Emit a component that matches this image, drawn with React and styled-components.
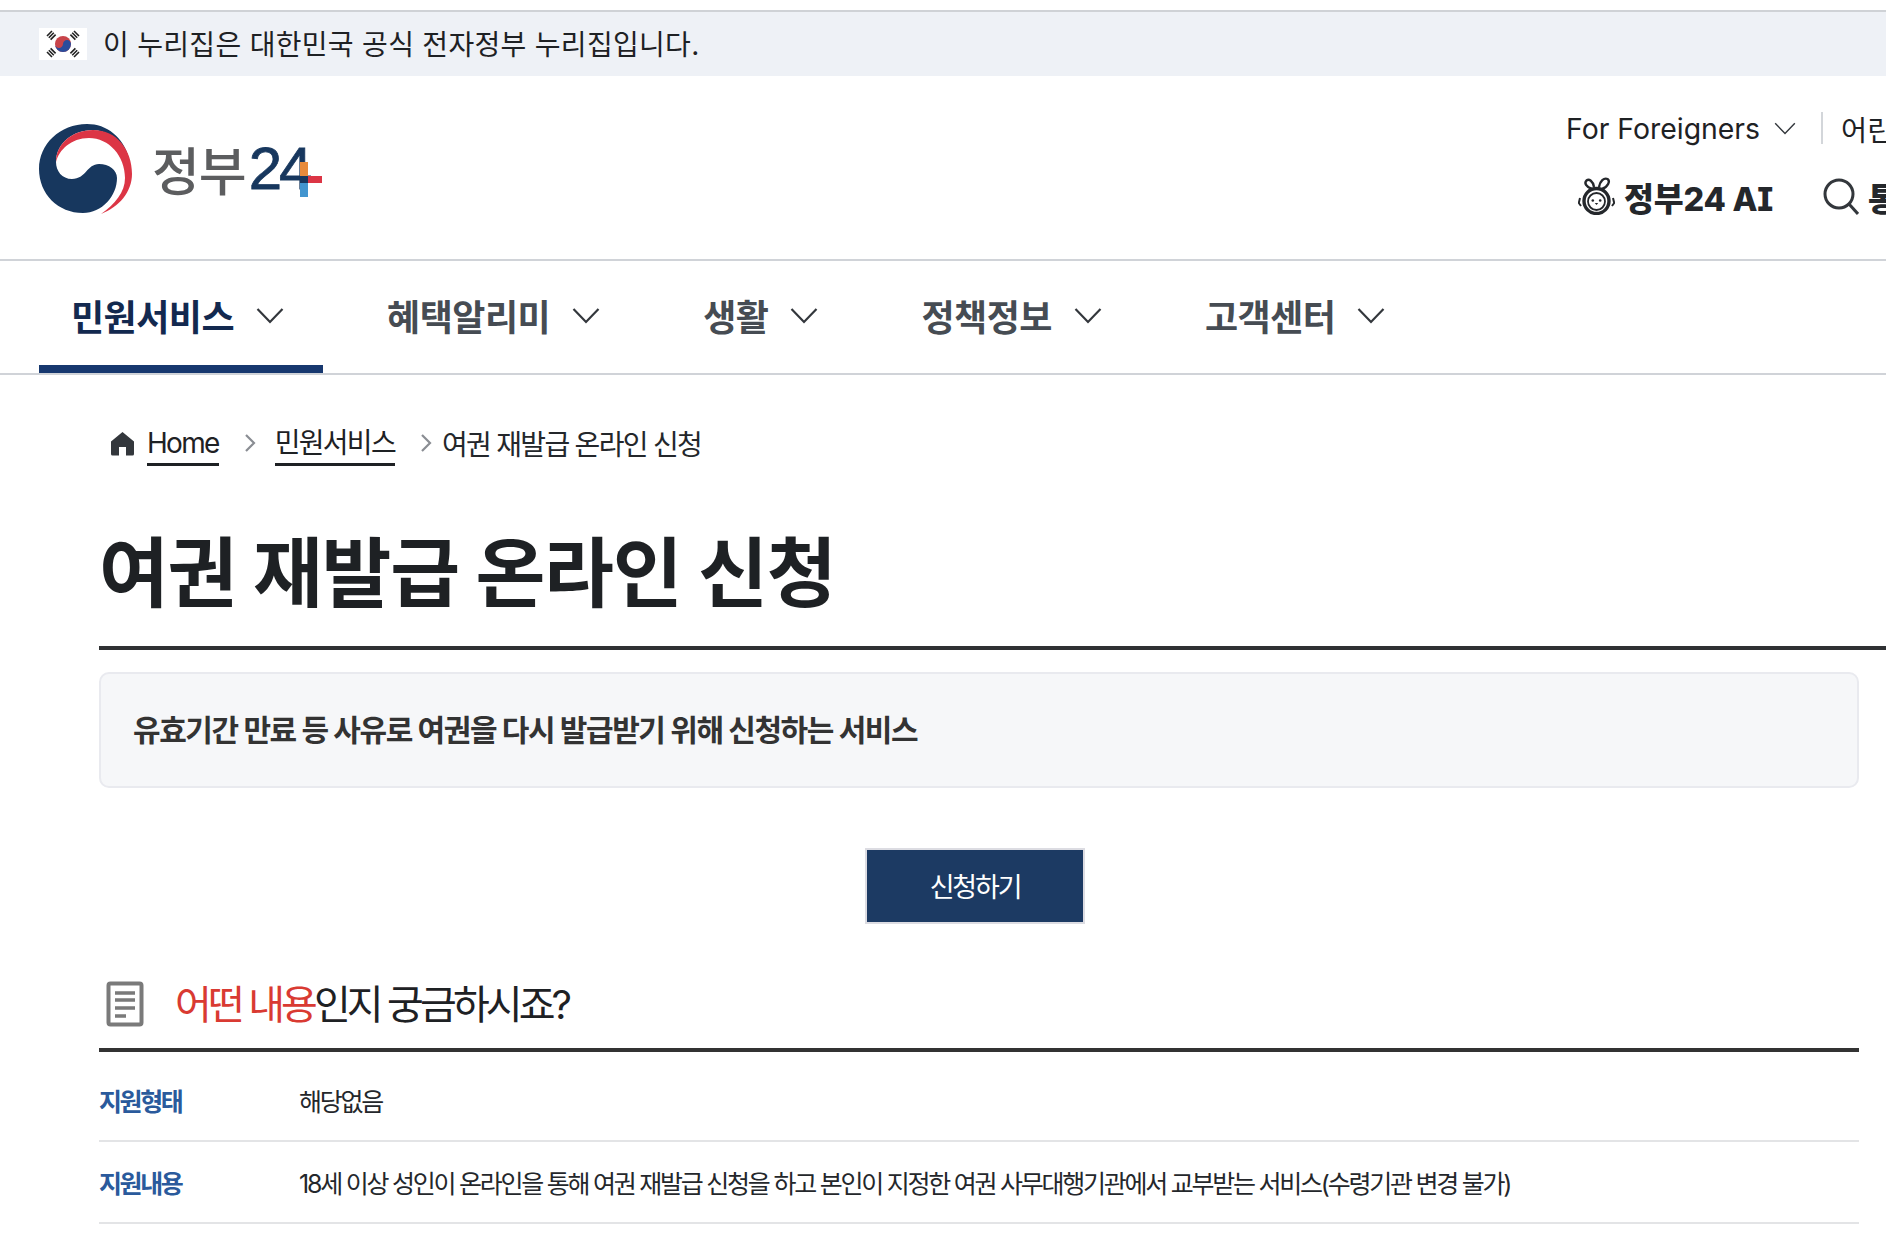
import React from "react";
import styled, { createGlobalStyle } from "styled-components";

const FONT = `Inter, "Noto Sans CJK KR", "Noto Sans", sans-serif`;

const GlobalStyle = createGlobalStyle`
  html, body {
    margin: 0;
    padding: 0;
    background: #fff;
    overflow: hidden;
  }
  body {
    font-family: ${FONT};
    color: #1e2124;
  }
`;

const Page = styled.div`
  width: 1886px;
  height: 1258px;
  overflow: hidden;
  padding-top: 10px;
  box-sizing: border-box;
`;

const Banner = styled.div`
  height: 64px;
  box-sizing: content-box;
  border-top: 2px solid #cfd2d6;
  background: #eef1f6;
  padding-left: 39px;
  display: flex;
  align-items: center;
  gap: 16px;
  font-size: 28px;
  letter-spacing: 0.3px;
  color: #1e2124;
`;

const BannerText = styled.span`
  margin-top: -2px;
`;

const Header = styled.header`
  height: 183px;
  padding-left: 39px;
  display: flex;
  align-items: flex-start;
  justify-content: space-between;
  border-bottom: 2px solid #d0d3d8;
`;

const Logo = styled.div`
  display: flex;
  align-items: center;
  margin-top: 48px;
  height: 89px;
`;

const LogoKo = styled.span`
  margin-left: 19px;
  font-size: 52px;
  font-weight: 500;
  color: #5c5d5f;
  letter-spacing: -1px;
`;

const LogoNum = styled.span`
  font-family: "Liberation Sans", sans-serif;
  font-size: 60px;
  color: #17375e;
  -webkit-text-stroke: 0.8px #17375e;
  letter-spacing: -3px;
  margin-left: 3px;
`;

const LogoPlus = styled.svg`
  width: 22px;
  height: 35px;
  margin: 22px 0 0 -9px;
`;

const Utility = styled.div`
  flex: none;
  width: 320px;
  display: flex;
  flex-direction: column;
`;

const UtilTop = styled.div`
  display: flex;
  align-items: center;
  margin-top: 36px;
  height: 32px;
  font-size: 28.4px;
  white-space: nowrap;
`;

const UtilDivider = styled.span`
  flex: none;
  width: 2px;
  height: 32px;
  background: #d3d6da;
  margin: 0 18px 0 25px;
`;

const UtilBottom = styled.div`
  display: flex;
  align-items: center;
  margin: 32px 0 0 12px;
  height: 40px;
  font-size: 32.5px;
  font-weight: 800;
  letter-spacing: -0.2px;
  font-feature-settings: "cv08";
  white-space: nowrap;
  color: #24272b;
`;

const UtilGap = styled.span`
  width: 50px;
  flex: none;
`;

const Mascot = styled.svg`
  width: 37px;
  height: 38px;
  margin-right: 9px;
  flex: none;
`;

const SearchIcon = styled.svg`
  width: 36px;
  height: 37px;
  margin-right: 9px;
  flex: none;
`;

const ChevronSvg = styled.svg`
  flex: none;
  width: ${({ $size }) => $size}px;
  height: ${({ $size }) => $size}px;
  margin-left: ${({ $gap }) => $gap}px;
`;

const Nav = styled.nav`
  height: 112px;
  padding-left: 39px;
  display: flex;
  gap: 32px;
  border-bottom: 2px solid #d0d3d8;
`;

const NavItem = styled.a`
  display: flex;
  align-items: center;
  padding: 4px 39px 0 32px;
  height: 112px;
  box-sizing: border-box;
  font-size: 36px;
  font-weight: 700;
  letter-spacing: -0.5px;
  color: ${({ $active }) => ($active ? "#13294f" : "#464c53")};
  border-bottom: 8px solid ${({ $active }) => ($active ? "#17386f" : "transparent")};
`;

const Main = styled.main`
  padding: 0 27px 0 99px;
`;

const Breadcrumb = styled.div`
  display: flex;
  align-items: center;
  height: 40px;
  margin: 48px 0 0 11px;
  font-size: 28px;
  letter-spacing: -1.7px;
  color: #24272b;
`;

const HomeIcon = styled.svg`
  width: 25px;
  height: 25px;
  margin-right: 12px;
`;

const CrumbLink = styled.a`
  color: #1e2124;
  padding-top: 3px;
  border-bottom: 3px solid #1e2124;
  line-height: 39px;
`;

const CrumbCurrent = styled.span`
  margin-left: -9px;
`;

const CrumbSep = styled.svg`
  width: 12px;
  height: 20px;
  margin: 0 19px 0 25px;
`;

const PageTitle = styled.h1`
  margin: 0 -27px 0 0;
  height: 187px;
  padding-top: 60px;
  box-sizing: border-box;
  border-bottom: 4px solid #2f3133;
  font-size: 76px;
  line-height: 100px;
  font-weight: 700;
  letter-spacing: -1.3px;
  color: #1e2124;
`;

const Summary = styled.div`
  margin-top: 22px;
  height: 116px;
  box-sizing: border-box;
  padding: 0 0 5px 32px;
  display: flex;
  align-items: center;
  border: 2px solid #e9eaef;
  border-radius: 10px;
  background: #f6f7f9;
  font-size: 30px;
  font-weight: 700;
  letter-spacing: -1.42px;
  color: #333;
`;

const ButtonRow = styled.div`
  margin-top: 60px;
  padding-right: 8px;
  display: flex;
  justify-content: center;
`;

const ApplyButton = styled.button`
  width: 220px;
  height: 76px;
  border: 2px solid #dcdce2;
  background: #1c3a63;
  color: #fff;
  font-family: ${FONT};
  font-size: 27px;
  letter-spacing: -2.2px;
  padding: 0 0 2px;
`;

const SectionHead = styled.div`
  margin-top: 46px;
  height: 64px;
  padding: 0 0 14px 7px;
  display: flex;
  align-items: center;
  border-bottom: 4px solid #333;
  font-size: 40px;
  letter-spacing: -3.9px;
  color: #1e2124;
`;

const DocIcon = styled.svg`
  width: 38px;
  height: 46px;
  margin: 4px 31px 0 0;
`;

const Red = styled.span`
  color: #d93a32;
`;

const InfoList = styled.div`
  margin-top: 8px;
`;

const InfoRow = styled.div`
  display: flex;
  align-items: center;
  height: 80px;
  border-bottom: 2px solid #e3e4e6;
  font-size: 25px;
`;

const InfoLabel = styled.div`
  width: 200px;
  flex: none;
  font-weight: 700;
  letter-spacing: -2.4px;
  color: #2a5a9c;
`;

const InfoValue = styled.div`
  letter-spacing: -2.25px;
  color: #24272b;
  white-space: nowrap;
`;

const Chevron = ({ size = 28, gap = 22, color = "#33373c", width = 2.2 }) => (
  <ChevronSvg $size={size} $gap={gap} viewBox="0 0 28 28" fill="none">
    <path d="M1.5 8 14 21 26.5 8" stroke={color} strokeWidth={width} />
  </ChevronSvg>
);

const Taegeuk = () => (
  <svg width="94" height="90" viewBox="0 0 94 90">
    <path
      fill="#17375e"
      d="M48 0C21 0 0 20 0 45c0 25 19 44 44 44 19 0 34-17 34-35 0-8-8-14-18-14-12 0-13 15-27 15-10 0-16-8-16-17C17 20 33 6 54 6c13 0 26 10 36 28C84 13 68 0 48 0Z"
    />
    <path
      fill="#dc3545"
      d="M17 38C17 20 33 6 54 6c24 0 39 20 39 44 0 18-13 33-31 40 14-10 24-22 24-36C86 32 70 14 50 14 32 14 20 26 17 38Z"
    />
  </svg>
);

const Flag = () => (
  <svg width="48" height="32" viewBox="0 0 48 32">
    <rect width="48" height="32" fill="#fff" />
    <circle cx="24" cy="16" r="8" fill="#c8444a" />
    <path d="M16 16a8 8 0 0 0 16 0c0-2.200-1.800-4-4-4s-4 1.800-4 4-1.800 4-4 4-4-1.800-4-4Z" fill="#2a4c9c" />
    <g stroke="#222" strokeWidth="1.600">
      <path d="M8 8 13 3M9.800 9.800 14.800 4.800M11.600 11.600 16.600 6.600" />
      <path d="M31.400 6.600l5 5M33.200 4.800l5 5M35 3l5 5" />
      <path d="M8 24l5 5M9.800 22.200l5 5M11.600 20.400l5 5" />
      <path d="M31.400 25.400l5-5M33.200 27.200l5-5M35 29l5-5" />
    </g>
  </svg>
);

const MascotIcon = () => (
  <Mascot viewBox="0 0 37 38" fill="none" stroke="#24272b" strokeWidth="2.400">
    <path d="M14 12C8 10 6 6 8.500 3.500 11 1.500 15 4 16 10" />
    <path d="M21 10C22 4 26 0.500 29.500 2 32.500 4 30 10 24 12" />
    <path d="M2 21 0.800 26 3 29M35 21 36.200 26 34 29" strokeWidth="2" />
    <circle cx="18.500" cy="24" r="12.500" fill="#fff" strokeWidth="3.400" />
    <circle cx="18.500" cy="24.500" r="8.500" strokeWidth="1.800" />
    <circle cx="14.800" cy="23.500" r="1.300" fill="#24272b" stroke="none" />
    <circle cx="22.200" cy="23.500" r="1.300" fill="#24272b" stroke="none" />
    <path d="M16.800 26h3.400l-1.700 2Z" fill="#24272b" stroke="none" />
  </Mascot>
);

const Separator = () => (
  <CrumbSep viewBox="0 0 12 20" fill="none">
    <path d="M2 2l8 8-8 8" stroke="#8a8d93" strokeWidth="2.200" />
  </CrumbSep>
);

export default function App() {
  return (
    <Page>
      <GlobalStyle />
      <Banner>
        <Flag />
        <BannerText>이 누리집은 대한민국 공식 전자정부 누리집입니다.</BannerText>
      </Banner>

      <Header>
        <Logo>
          <Taegeuk />
          <LogoKo>정부</LogoKo>
          <LogoNum>24</LogoNum>
          <LogoPlus viewBox="0 0 22 35">
            <rect x="0" y="0" width="8" height="14" fill="#e88b3c" />
            <rect x="8" y="14" width="14" height="7" fill="#dc3545" />
            <rect x="0" y="21" width="8" height="14" fill="#4295cf" />
            <rect x="0" y="14" width="8" height="7" fill="#17375e" />
          </LogoPlus>
        </Logo>
        <Utility>
          <UtilTop>
            For Foreigners
            <Chevron size={22} gap={14} width={1.8} />
            <UtilDivider />
            어린이
          </UtilTop>
          <UtilBottom>
            <MascotIcon />
            정부24 AI
            <UtilGap />
            <SearchIcon viewBox="0 0 36 37" fill="none" stroke="#33373c" strokeWidth="3">
              <circle cx="16" cy="16" r="14" />
              <path d="M26 26 35 36" />
            </SearchIcon>
            통합검색
          </UtilBottom>
        </Utility>
      </Header>

      <Nav>
        <NavItem $active>민원서비스<Chevron /></NavItem>
        <NavItem>혜택알리미<Chevron /></NavItem>
        <NavItem>생활<Chevron /></NavItem>
        <NavItem>정책정보<Chevron /></NavItem>
        <NavItem>고객센터<Chevron /></NavItem>
      </Nav>

      <Main>
        <Breadcrumb>
          <HomeIcon viewBox="0 0 25 25">
            <path fill="#33373c" d="M12.500 1 24 10.500V23a1.500 1.500 0 0 1-1.500 1.500H16V16H9v8.500H2.500A1.500 1.500 0 0 1 1 23V10.500Z" />
          </HomeIcon>
          <CrumbLink>Home</CrumbLink>
          <Separator />
          <CrumbLink>민원서비스</CrumbLink>
          <Separator />
          <CrumbCurrent>여권 재발급 온라인 신청</CrumbCurrent>
        </Breadcrumb>

        <PageTitle>여권 재발급 온라인 신청</PageTitle>

        <Summary>유효기간 만료 등 사유로 여권을 다시 발급받기 위해 신청하는 서비스</Summary>

        <ButtonRow>
          <ApplyButton>신청하기</ApplyButton>
        </ButtonRow>

        <SectionHead>
          <DocIcon viewBox="0 0 38 46" fill="none">
            <rect x="2.500" y="2.500" width="33" height="41" rx="2" stroke="#7a7a7a" strokeWidth="4" />
            <path d="M9 12h20M9 19h20M9 27h20M9 35h11" stroke="#7a7a7a" strokeWidth="3.500" />
          </DocIcon>
          <span><Red>어떤 내용</Red>인지 궁금하시죠?</span>
        </SectionHead>

        <InfoList>
          <InfoRow>
            <InfoLabel>지원형태</InfoLabel>
            <InfoValue>해당없음</InfoValue>
          </InfoRow>
          <InfoRow>
            <InfoLabel>지원내용</InfoLabel>
            <InfoValue>18세 이상 성인이 온라인을 통해 여권 재발급 신청을 하고 본인이 지정한 여권 사무대행기관에서 교부받는 서비스(수령기관 변경 불가)</InfoValue>
          </InfoRow>
        </InfoList>
      </Main>
    </Page>
  );
}
